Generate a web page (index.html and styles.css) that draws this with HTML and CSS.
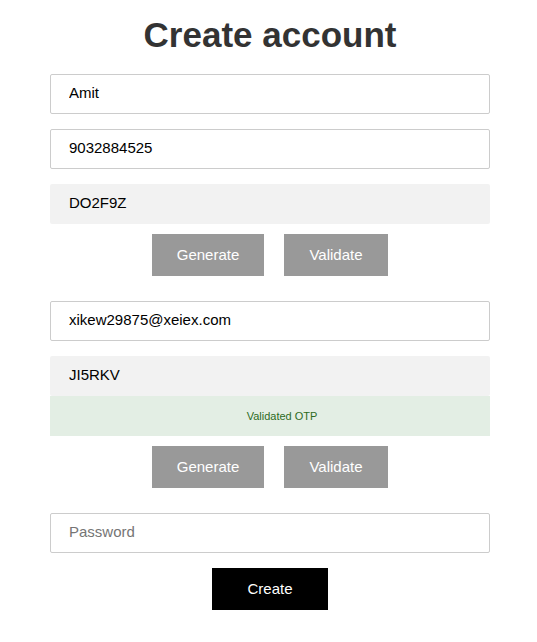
FILE: index.html
```html
<!DOCTYPE html>
<html>
<head>
<meta charset="utf-8">
<link rel="stylesheet" href="styles.css">
</head>
<body>
<div class="page">
  <h1 class="title">Create account</h1>
  <form class="form">
    <input class="field" type="text" value="Amit">
    <input class="field" type="text" value="9032884525">
    <div class="otp-group">
      <input class="field otp" type="text" value="DO2F9Z">
    </div>
    <div class="actions">
      <button type="button" class="btn gray gen">Generate</button>
      <button type="button" class="btn gray val">Validate</button>
    </div>
    <input class="field sect" type="text" value="xikew29875@xeiex.com">
    <div class="otp-group">
      <input class="field otp" type="text" value="JI5RKV">
      <div class="msg">Validated OTP</div>
    </div>
    <div class="actions">
      <button type="button" class="btn gray gen">Generate</button>
      <button type="button" class="btn gray val">Validate</button>
    </div>
    <input class="field sect" type="password" placeholder="Password">
    <div class="actions create-row">
      <button type="button" class="btn black">Create</button>
    </div>
  </form>
</div>
</body>
</html>
```
FILE: styles.css
```css
html, body {
  margin: 0;
  padding: 0;
  background: #fff;
}
body {
  font-family: "Liberation Sans", Arial, sans-serif;
}
.page {
  width: 440px;
  margin-left: 50px;
  display: flex;
  flex-direction: column;
}
.title {
  margin: 0;
  padding-top: 13px;
  height: 74px;
  box-sizing: border-box;
  text-align: center;
  font-size: 35px;
  line-height: 44px;
  font-weight: bold;
  color: #333;
  flex-shrink: 0;
}
.form {
  display: flex;
  flex-direction: column;
}
.field {
  display: block;
  box-sizing: border-box;
  width: 440px;
  height: 40px;
  margin: 0 0 15px 0;
  padding: 0 18px 3px 18px;
  border: 1px solid #ccc;
  border-radius: 2px;
  font-family: "Liberation Sans", Arial, sans-serif;
  font-size: 15px;
  color: #000;
  background: #fff;
  outline: none;
}
.field::placeholder {
  color: #757575;
}
.otp-group {
  display: flex;
  flex-direction: column;
}
.field.otp {
  margin: 0;
  border: none;
  background: #f2f2f2;
  padding: 0 19px 3px 19px;
}
.msg {
  height: 40px;
  box-sizing: border-box;
  padding-left: 24px;
  padding-bottom: 1px;
  display: flex;
  align-items: center;
  justify-content: center;
  background: #e3eee4;
  color: #2e6b1e;
  font-size: 11px;
}
.actions {
  display: flex;
  justify-content: center;
  gap: 20px;
  margin-top: 10px;
  margin-bottom: 25px;
}
.btn {
  height: 42px;
  border: none;
  border-radius: 0;
  font-family: "Liberation Sans", Arial, sans-serif;
  font-size: 15px;
  color: #fff;
  padding: 0 0 2px 0;
}
.btn.gray {
  background: #999;
}
.btn.gen {
  width: 112px;
}
.btn.val {
  width: 104px;
}
.create-row {
  margin-top: 0;
}
.btn.black {
  background: #000;
  width: 116px;
}
```
